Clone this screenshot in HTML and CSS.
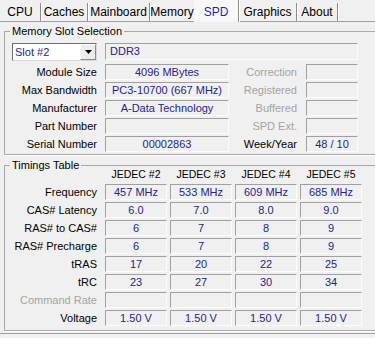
FILE: index.html
```html
<!DOCTYPE html>
<html lang="en">
<head>
    <meta charset="UTF-8">
    <meta name="viewport" content="width=device-width, initial-scale=1.0">
    <title>CPU-Z SPD</title>
    <link rel="stylesheet" href="styles.css">
</head>
<body>
    <div class="tabs">
        <span class="tab">CPU</span>
        <span class="tab">Caches</span>
        <span class="tab">Mainboard</span>
        <span class="tab no-sep">Memory</span>
        <span class="tab active">SPD</span>
        <span class="tab">Graphics</span>
        <span class="tab">About</span>
    </div>
    <div class="panel">
        <!-- Memory Slot Selection -->
        <fieldset class="group slot-group">
            <legend>Memory Slot Selection</legend>
            <div class="slot-grid">
                <div class="combo">
                    <span class="combo-text">Slot #2</span>
                    <span class="combo-btn">
                        <svg width="7" height="4" viewBox="0 0 7 4"><polygon points="0,0 7,0 3.5,4" fill="#000"/></svg>
                    </span>
                </div>
                <div class="box type-box">DDR3</div>

                <div class="label">Module Size</div>
                <div class="box">4096 MBytes</div>
                <div class="label label-r dim">Correction</div>
                <div class="box"></div>

                <div class="label">Max Bandwidth</div>
                <div class="box">PC3-10700 (667 MHz)</div>
                <div class="label label-r dim">Registered</div>
                <div class="box"></div>

                <div class="label">Manufacturer</div>
                <div class="box">A-Data Technology</div>
                <div class="label label-r dim">Buffered</div>
                <div class="box"></div>

                <div class="label">Part Number</div>
                <div class="box"></div>
                <div class="label label-r dim">SPD Ext.</div>
                <div class="box"></div>

                <div class="label">Serial Number</div>
                <div class="box">00002863</div>
                <div class="label label-r">Week/Year</div>
                <div class="box">48 / 10</div>
            </div>
        </fieldset>

        <!-- Timings Table -->
        <fieldset class="group timing-group">
            <legend>Timings Table</legend>
            <div class="timing-grid">
                <div></div>
                <div class="head">JEDEC #2</div>
                <div class="head">JEDEC #3</div>
                <div class="head">JEDEC #4</div>
                <div class="head">JEDEC #5</div>

                <div class="label">Frequency</div>
                <div class="box">457 MHz</div>
                <div class="box">533 MHz</div>
                <div class="box">609 MHz</div>
                <div class="box">685 MHz</div>

                <div class="label">CAS# Latency</div>
                <div class="box">6.0</div>
                <div class="box">7.0</div>
                <div class="box">8.0</div>
                <div class="box">9.0</div>

                <div class="label">RAS# to CAS#</div>
                <div class="box">6</div>
                <div class="box">7</div>
                <div class="box">8</div>
                <div class="box">9</div>

                <div class="label">RAS# Precharge</div>
                <div class="box">6</div>
                <div class="box">7</div>
                <div class="box">8</div>
                <div class="box">9</div>

                <div class="label">tRAS</div>
                <div class="box">17</div>
                <div class="box">20</div>
                <div class="box">22</div>
                <div class="box">25</div>

                <div class="label">tRC</div>
                <div class="box">23</div>
                <div class="box">27</div>
                <div class="box">30</div>
                <div class="box">34</div>

                <div class="label dim">Command Rate</div>
                <div class="box"></div>
                <div class="box"></div>
                <div class="box"></div>
                <div class="box"></div>

                <div class="label">Voltage</div>
                <div class="box">1.50 V</div>
                <div class="box">1.50 V</div>
                <div class="box">1.50 V</div>
                <div class="box">1.50 V</div>
            </div>
        </fieldset>
    </div>
</body>
</html>
```

FILE: styles.css
```css
html, body {
    margin: 0;
    width: 375px;
    height: 338px;
    overflow: hidden;
}
body {
    background-color: #f0f0f0;
    font-family: "Liberation Sans", Arial, sans-serif;
    font-size: 11px;
    color: #000;
}
/* Tab strip */
.tabs {
    display: grid;
    grid-template-columns: 41px 47px 62px 44px 45px 58px 41px 1fr;
    align-items: end;
    height: 21px;
    border-bottom: 1px solid #a0a0a0;
    font-size: 12px;
}
.tab {
    box-sizing: border-box;
    height: 18px;
    line-height: 18px;
    text-align: center;
    border-right: 1px solid #8c8c8c;
    box-shadow: 1px 0 0 #fff;
    white-space: nowrap;
}
.tab.no-sep {
    border-right: none;
    box-shadow: none;
}
.tab.active {
    height: 22px;
    line-height: 24px;
    margin-bottom: -1px;
    background-color: #f8f8f8;
    color: #1f1fc4;
}
.panel {
    padding: 3px 0 2px 4px;
    border-bottom: 1px solid #a0a0a0;
    overflow: hidden;
}
/* Group boxes */
.group {
    margin: 0 -6px 0 0;
    padding: 0 0 0 6px;
    min-inline-size: 0;
    border: 1px solid #a8a8a8;
    box-shadow: 1px 1px 0 #fff;
}
.group legend {
    padding: 0 2px;
    margin-left: -1px;
    line-height: 12px;
}
.slot-group {
    padding-bottom: 2px;
}
.timing-group {
    margin-top: 4px;
    padding-bottom: 4px;
}
.slot-grid {
    display: grid;
    grid-template-columns: 94px 124px 77px 52px;
    grid-template-rows: 19px repeat(5, 16px);
    row-gap: 2px;
    margin-top: 6px;
}
.timing-grid {
    display: grid;
    grid-template-columns: 91px repeat(4, 62px);
    grid-template-rows: 15px repeat(8, 16px);
    column-gap: 3px;
    row-gap: 2px;
    margin-top: -4px;
}
.label {
    text-align: right;
    padding-right: 8px;
    line-height: 16px;
    white-space: nowrap;
}
.timing-grid .label {
    padding-right: 5px;
}
.label-r {
    padding-right: 9px;
}
.dim {
    color: #a3a3a3;
}
.head {
    text-align: center;
    line-height: 15px;
    font-size: 10.5px;
    white-space: nowrap;
}
.box {
    box-sizing: border-box;
    height: 16px;
    line-height: 14px;
    border: 1px solid;
    border-color: #a0a0a0 #fcfcfc #fcfcfc #a0a0a0;
    color: #24248c;
    text-align: center;
    white-space: nowrap;
    overflow: hidden;
}
.type-box {
    grid-column: 2 / 5;
    height: 17px;
    line-height: 15px;
    text-align: left;
    padding-left: 4px;
}
/* Slot combo box */
.combo {
    display: flex;
    box-sizing: border-box;
    width: 85px;
    height: 18px;
    margin-left: 1px;
    background-color: #fff;
    border: 1px solid;
    border-color: #6f6f6f #d8d8d8 #d8d8d8 #6f6f6f;
}
.combo-text {
    flex: 1;
    padding-left: 2px;
    line-height: 16px;
    color: #24248c;
}
.combo-btn {
    display: flex;
    align-items: center;
    justify-content: center;
    width: 16px;
    background-color: #ececec;
    border: 1px solid;
    border-color: #fff #8c8c8c #8c8c8c #fff;
    box-sizing: border-box;
}
```
